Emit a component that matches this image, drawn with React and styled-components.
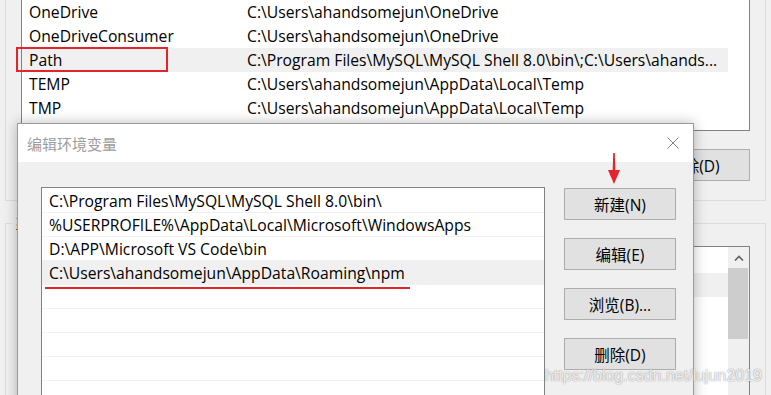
import React from 'react';
import styled, { createGlobalStyle } from 'styled-components';

const GlobalStyle = createGlobalStyle`
  html, body {
    margin: 0;
    padding: 0;
    background: #f0f0f0;
  }
  body {
    font-family: "Open Sans", "Noto Sans CJK SC", sans-serif;
    color: #000;
  }
`;

const Screen = styled.div`
  position: relative;
  width: 771px;
  height: 395px;
  overflow: hidden;
  background: #f0f0f0;
`;

const BackWindow = styled.div`
  width: 766px;
  box-sizing: border-box;
  padding-left: 5px;
`;

const GroupBox = styled.fieldset`
  margin: ${p => (p.$cut ? '0' : '12px 0 0')};
  padding: ${p => (p.$cut ? '0 15px 19px' : '13px 15px 20px')};
  border: 1px solid #dcdcdc;
  ${p => p.$cut && 'border-top: none;'}
  min-width: 0;
`;

const Legend = styled.legend`
  font-size: 15px;
  line-height: 20px;
  padding: 0 3px;
  margin-left: -9px;
`;

const ListView = styled.div`
  display: flex;
  background: #fff;
  border: 1px solid #828282;
  ${p => p.$cut && 'border-top: none;'}
  height: ${p => p.$height}px;
  box-sizing: border-box;
`;

const ListBody = styled.div`
  flex: 1;
  padding-top: ${p => p.$offset || 0}px;
`;

const EnvRow = styled.div`
  position: relative;
  display: flex;
  align-items: center;
  height: 24px;
  font-size: 15.7px;
  white-space: nowrap;
  background: ${p => (p.$selected ? '#f0f0f0' : 'transparent')};
`;

const NameCell = styled.span`
  width: 225px;
  flex-shrink: 0;
  box-sizing: border-box;
  padding-left: 7px;
`;

const ValueCell = styled.span`
  overflow: hidden;
`;

const RedBox = styled.div`
  position: absolute;
  left: -6px;
  top: -1px;
  width: 152px;
  height: 25px;
  box-sizing: border-box;
  border: 2px solid #e3242b;
`;

const Gutter = styled.div`
  width: 21px;
  flex-shrink: 0;
  display: flex;
  flex-direction: column;
  background: ${p => (p.$track ? '#f0f0f0' : '#fff')};
`;

const ScrollArrow = styled.div`
  height: 21px;
  display: flex;
  align-items: center;
  justify-content: center;
`;

const ScrollThumb = styled.div`
  height: 71px;
  margin-right: 1px;
  background: #cdcdcd;
`;

const ButtonRow = styled.div`
  display: flex;
  justify-content: flex-end;
  gap: 10px;
  margin-top: 18px;
`;

const WinButton = styled.button`
  width: 112px;
  height: 32px;
  box-sizing: border-box;
  padding: 0;
  border: 1px solid #adadad;
  background: #e1e1e1;
  font-family: "Open Sans", "Noto Sans CJK SC", sans-serif;
  font-size: 15.5px;
  color: #000;
`;

const Dialog = styled.div`
  position: absolute;
  left: 17px;
  top: 123px;
  width: 677px;
  height: 300px;
  box-sizing: border-box;
  border: 1px solid #9b9b9b;
  background: #f0f0f0;
  box-shadow: 0 0 12px rgba(0, 0, 0, 0.28);
`;

const TitleBar = styled.div`
  height: 38px;
  display: flex;
  align-items: center;
  justify-content: space-between;
  padding: 0 14px 0 9px;
  background: #fff;
`;

const Title = styled.span`
  font-family: "Noto Sans CJK SC", sans-serif;
  font-size: 15px;
  color: #9d9d9d;
`;

const DialogBody = styled.div`
  display: flex;
  gap: 19px;
  padding: 25px 17px 0 23px;
`;

const PathList = styled.div`
  width: 504px;
  height: 240px;
  box-sizing: border-box;
  padding-top: 1px;
  border: 1px solid #828282;
  background: #fff;
`;

const PathRow = styled.div`
  position: relative;
  display: flex;
  align-items: center;
  height: 24px;
  box-sizing: border-box;
  padding-left: 7px;
  border-bottom: 1px solid #f0f0f0;
  font-size: 15.7px;
  white-space: nowrap;
  background: ${p => (p.$selected ? '#f0f0f0' : '#fff')};
`;

const RedUnderline = styled.div`
  position: absolute;
  z-index: 1;
  left: 3px;
  top: 26px;
  width: 365px;
  height: 2px;
  background: #e3242b;
`;

const ButtonColumn = styled.div`
  display: flex;
  flex-direction: column;
  gap: 18px;
  margin-top: 1px;
`;

const ArrowMark = styled.svg`
  position: absolute;
  left: 589px;
  top: 29px;
`;

const Watermark = styled.div`
  position: absolute;
  right: 9px;
  bottom: 10px;
  font-family: "Liberation Sans", Arial, sans-serif;
  font-size: 16px;
  color: rgba(255, 255, 255, 0.85);
  text-shadow: 0 0 1px rgba(0, 0, 0, 0.35), 0 0 2px rgba(0, 0, 0, 0.2);
`;

const userVars = [
  ['OneDrive', 'C:\\Users\\ahandsomejun\\OneDrive'],
  ['OneDriveConsumer', 'C:\\Users\\ahandsomejun\\OneDrive'],
  ['Path', 'C:\\Program Files\\MySQL\\MySQL Shell 8.0\\bin\\;C:\\Users\\ahands...'],
  ['TEMP', 'C:\\Users\\ahandsomejun\\AppData\\Local\\Temp'],
  ['TMP', 'C:\\Users\\ahandsomejun\\AppData\\Local\\Temp'],
];

const pathEntries = [
  'C:\\Program Files\\MySQL\\MySQL Shell 8.0\\bin\\',
  '%USERPROFILE%\\AppData\\Local\\Microsoft\\WindowsApps',
  'D:\\APP\\Microsoft VS Code\\bin',
  'C:\\Users\\ahandsomejun\\AppData\\Roaming\\npm',
  '', '', '', '', '',
];

const CloseIcon = () => (
  <svg width="12" height="12" viewBox="0 0 12 12">
    <path d="M0.5 0.5 L11.5 11.5 M11.5 0.5 L0.5 11.5" stroke="#808080" strokeWidth="1" />
  </svg>
);

const UpChevron = () => (
  <svg width="10" height="6" viewBox="0 0 10 6">
    <path d="M1 5.5 L5 1.5 L9 5.5" fill="none" stroke="#606060" strokeWidth="1.6" />
  </svg>
);

const App = () => {
  return (
    <Screen>
      <GlobalStyle />
      <BackWindow>
        {/* user variables, top of the group is above the crop */}
        <GroupBox $cut>
          <ListView $cut $height={131}>
            <ListBody>
              {userVars.map(([name, value]) => (
                <EnvRow key={name} $selected={name === 'Path'}>
                  {name === 'Path' && <RedBox />}
                  <NameCell>{name}</NameCell>
                  <ValueCell>{value}</ValueCell>
                </EnvRow>
              ))}
            </ListBody>
            <Gutter />
          </ListView>
          <ButtonRow>
            <WinButton>新建(N)...</WinButton>
            <WinButton>编辑(E)...</WinButton>
            <WinButton>删除(D)</WinButton>
          </ButtonRow>
        </GroupBox>

        {/* system variables */}
        <GroupBox>
          <Legend>系统变量(S)</Legend>
          <ListView $height={160}>
            <ListBody $offset={2}>
              <EnvRow />
              <EnvRow $selected />
              <EnvRow />
              <EnvRow />
            </ListBody>
            <Gutter $track>
              <ScrollArrow>
                <UpChevron />
              </ScrollArrow>
              <ScrollThumb />
            </Gutter>
          </ListView>
        </GroupBox>
      </BackWindow>

      <Dialog>
        <TitleBar>
          <Title>编辑环境变量</Title>
          <CloseIcon />
        </TitleBar>
        <DialogBody>
          <PathList>
            {pathEntries.map((entry, i) => (
              <PathRow key={i} $selected={i === 3}>
                {entry}
                {i === 3 && <RedUnderline />}
              </PathRow>
            ))}
          </PathList>
          <ButtonColumn>
            <WinButton>新建(N)</WinButton>
            <WinButton>编辑(E)</WinButton>
            <WinButton>浏览(B)...</WinButton>
            <WinButton>删除(D)</WinButton>
          </ButtonColumn>
        </DialogBody>
        <ArrowMark width="14" height="31" viewBox="0 0 14 31">
          <polygon points="6.2,0 7.8,0 8.4,19 5.6,19" fill="#e3242b" />
          <polygon points="1,17 13,17 7,31" fill="#e3242b" />
        </ArrowMark>
      </Dialog>

      <Watermark>https://blog.csdn.net/lujun2019</Watermark>
    </Screen>
  );
};

export default App;
